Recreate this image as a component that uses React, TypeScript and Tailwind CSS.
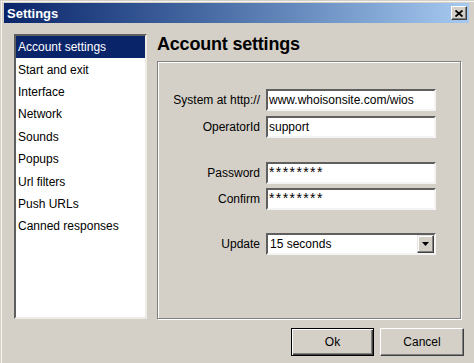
import React from "react";

const items = [
  "Account settings",
  "Start and exit",
  "Interface",
  "Network",
  "Sounds",
  "Popups",
  "Url filters",
  "Push URLs",
  "Canned responses",
];

function Field({ value, stars }: { value: string; stars?: boolean }) {
  return (
    <div className="w-[170px] h-[22px] bg-white border-2 border-t-[#5f5f5f] border-l-[#5f5f5f] border-b-[#f4f4f4] border-r-[#f4f4f4] flex items-center pl-[1px] overflow-hidden whitespace-nowrap">
      {stars ? (
        <span className="tracking-[1.4px] text-[14px] leading-none -mt-[2px]">{value}</span>
      ) : (
        <span>{value}</span>
      )}
    </div>
  );
}

function Row({ label, children, mt }: { label: string; children: React.ReactNode; mt: string }) {
  return (
    <div className={`flex items-center ${mt}`}>
      <div className="w-[102px] text-right whitespace-nowrap">{label}</div>
      <div className="ml-[6px]">{children}</div>
    </div>
  );
}

export default function App() {
  return (
    <div className="w-[474px] h-[363px] overflow-hidden bg-[#d4d0c8] relative font-['Liberation_Sans',Arial,sans-serif] text-[12px] text-black">
      <div className="absolute left-[1px] top-[1px] bottom-0 w-[1px] bg-[#f6f5f2]" />
      <div className="absolute left-[1px] top-[1px] right-0 h-[1px] bg-[#f6f5f2]" />
      {/* Title bar */}
      <div className="mt-[3px] ml-[4px] mr-[5px] h-[20px] bg-gradient-to-r from-[#0a246a] to-[#a6caf0] flex items-center justify-between">
        <span className="pl-[3px] text-white font-bold text-[13px] leading-none">Settings</span>
        <div className="mr-[2px] w-[16px] h-[14px] bg-[#d4d0c8] border border-t-white border-l-white border-r-[#404040] border-b-[#404040] shadow-[inset_-1px_-1px_0_#808080] flex items-center justify-center">
          <svg width="8" height="7" viewBox="0 0 8 7">
            <path d="M0.5 0.5 L7.5 6.5 M7.5 0.5 L0.5 6.5" stroke="#000" strokeWidth="1.8" />
          </svg>
        </div>
      </div>

      {/* Body */}
      <div className="flex pt-[11px] pl-[14px] pr-[13px]">
        {/* List */}
        <div className="w-[133px] h-[285px] bg-white border-2 border-t-[#5f5f5f] border-l-[#5f5f5f] border-b-[#ecebe6] border-r-[#ecebe6]">
          {items.map((it, i) => (
            <div
              key={it}
              className={`h-[22.4px] flex items-center pl-[2px] whitespace-nowrap ${
                i === 0 ? "bg-[#0a246a] text-white" : ""
              }`}
            >
              {it}
            </div>
          ))}
        </div>

        {/* Right column */}
        <div className="ml-[10px] flex-1 flex flex-col">
          <div className="mt-[1px] font-bold text-[18px] leading-[18px] tracking-[-0.2px]">Account settings</div>
          <div className="mt-[8px] h-[258px] border border-[#808080] shadow-[1px_1px_0_#fff,inset_1px_1px_0_#fff] pt-[27px]">
            <Row label="System at http://" mt="">
              <Field value="www.whoisonsite.com/wios" />
            </Row>
            <Row label="OperatorId" mt="mt-[5px]">
              <Field value="support" />
            </Row>
            <Row label="Password" mt="mt-[24px]">
              <Field value="********" stars />
            </Row>
            <Row label="Confirm" mt="mt-[4px]">
              <Field value="********" stars />
            </Row>
            <Row label="Update" mt="mt-[23px]">
              <div className="w-[170px] h-[22px] bg-white border-2 border-t-[#5f5f5f] border-l-[#5f5f5f] border-b-[#f4f4f4] border-r-[#f4f4f4] flex items-center">
                <span className="pl-[2px] flex-1">15 seconds</span>
                <div className="w-[17px] h-[18px] bg-[#d4d0c8] border border-t-[#e8e6e0] border-l-[#e8e6e0] border-r-[#404040] border-b-[#404040] shadow-[inset_-1px_-1px_0_#808080,inset_1px_1px_0_#fff] flex items-center justify-center">
                  <svg width="7" height="4" viewBox="0 0 7 4">
                    <path d="M0 0 H7 L3.5 4 Z" fill="#000" />
                  </svg>
                </div>
              </div>
            </Row>
          </div>
        </div>
      </div>

      {/* Buttons */}
      <div className="flex justify-end pr-[10px] mt-[9px] gap-[6px]">
        <div className="w-[83px] h-[28px] border border-black shadow-[inset_1px_1px_0_#fff,inset_-1px_-1px_0_#404040,inset_-2px_-2px_0_#808080] flex items-center justify-center">
          Ok
        </div>
        <div className="w-[84px] h-[28px] border border-t-white border-l-white border-r-[#404040] border-b-[#404040] shadow-[inset_-1px_-1px_0_#808080] flex items-center justify-center">
          Cancel
        </div>
      </div>
    </div>
  );
}
